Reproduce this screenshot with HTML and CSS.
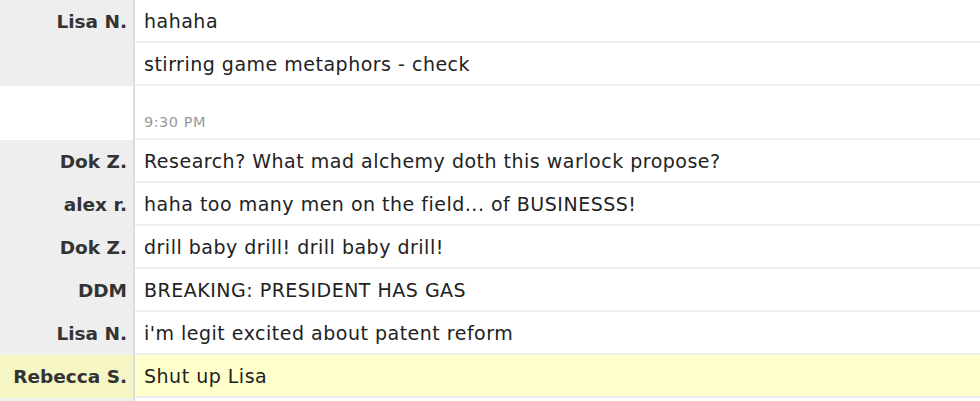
FILE: index.html
```html
<!DOCTYPE html>
<html>
<head>
<meta charset="utf-8">
<link rel="stylesheet" href="styles.css">
</head>
<body>
<div class="log">
  <div class="group">
    <div class="name">Lisa N.</div>
    <div class="msgs">
      <div class="msg">hahaha</div>
      <div class="msg">stirring game metaphors - check</div>
    </div>
  </div>
  <div class="group stamp">
    <div class="name"></div>
    <div class="msgs"><div class="time">9:30 PM</div></div>
  </div>
  <div class="group">
    <div class="name">Dok Z.</div>
    <div class="msgs"><div class="msg">Research? What mad alchemy doth this warlock propose?</div></div>
  </div>
  <div class="group">
    <div class="name">alex r.</div>
    <div class="msgs"><div class="msg">haha too many men on the field... of BUSINESSS!</div></div>
  </div>
  <div class="group">
    <div class="name">Dok Z.</div>
    <div class="msgs"><div class="msg">drill baby drill! drill baby drill!</div></div>
  </div>
  <div class="group">
    <div class="name">DDM</div>
    <div class="msgs"><div class="msg">BREAKING: PRESIDENT HAS GAS</div></div>
  </div>
  <div class="group">
    <div class="name">Lisa N.</div>
    <div class="msgs"><div class="msg">i'm legit excited about patent reform</div></div>
  </div>
  <div class="group hl">
    <div class="name">Rebecca S.</div>
    <div class="msgs"><div class="msg">Shut up Lisa</div></div>
  </div>
  <div class="group">
    <div class="name"></div>
    <div class="msgs"><div class="msg"></div></div>
  </div>
</div>
</body>
</html>
```
FILE: styles.css
```css
html, body {
  margin: 0;
  padding: 0;
  background: #fff;
}
body {
  font-family: "DejaVu Sans", Verdana, sans-serif;
  font-size: 19px;
  letter-spacing: 0.5px;
  color: #222;
}
.log {
  display: flex;
  flex-direction: column;
  height: 401px;
  overflow: hidden;
}
.group {
  display: grid;
  grid-template-columns: 135px 1fr;
  flex: none;
}
.name {
  background: #eeeeee;
  border-right: 2px solid #dddddd;
  text-align: right;
  padding: 2px 6px 0 0;
  line-height: 39px;
  font-size: 18.5px;
  letter-spacing: 0;
  font-weight: bold;
  color: #333;
}
.msgs {
  min-width: 0;
}
.msg {
  height: 43px;
  box-sizing: border-box;
  padding: 2px 0 0 9px;
  line-height: 39px;
  border-bottom: 2px solid #eeeeee;
  white-space: nowrap;
}
.group:first-child .name {
  border-bottom: 2px solid #eeeeee;
}
.stamp .name {
  background: #fff;
}
.stamp .msgs {
  height: 54px;
  box-sizing: border-box;
  border-bottom: 2px solid #eeeeee;
}
.time {
  padding: 28px 0 0 9px;
  font-size: 14.5px;
  letter-spacing: 0.5px;
  color: #999;
}
.hl .name {
  background: #f6f6c4;
}
.hl .msg {
  background: #ffffcc;
}
```
